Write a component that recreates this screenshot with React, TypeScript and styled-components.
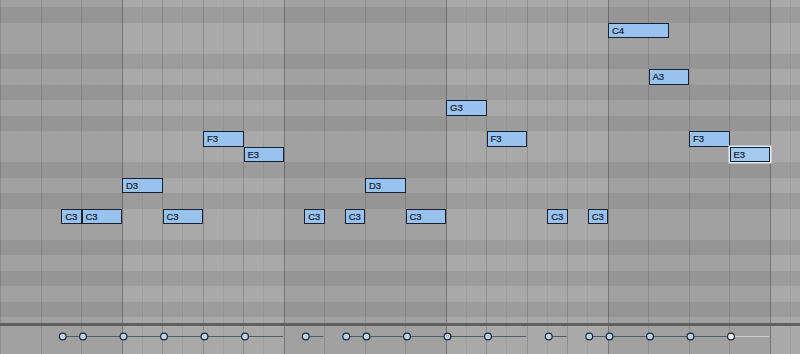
import React from 'react';
import styled, { createGlobalStyle } from 'styled-components';

const GlobalStyle = createGlobalStyle`
  html, body {
    margin: 0;
    padding: 0;
    background: #a9a9a9;
  }
`;

const BEAT = 40.5;
const X0 = 0.5;
const ROW = 15.5;
const C3_TOP = 208.5;

type Note = { name: string; pitch: number; start: number; len: number; selected?: boolean };

const notes: Note[] = [
  { name: 'C3', pitch: 0, start: 1.5, len: 0.5 },
  { name: 'C3', pitch: 0, start: 2, len: 1 },
  { name: 'D3', pitch: 2, start: 3, len: 1 },
  { name: 'C3', pitch: 0, start: 4, len: 1 },
  { name: 'F3', pitch: 5, start: 5, len: 1 },
  { name: 'E3', pitch: 4, start: 6, len: 1 },
  { name: 'C3', pitch: 0, start: 7.5, len: 0.5 },
  { name: 'C3', pitch: 0, start: 8.5, len: 0.5 },
  { name: 'D3', pitch: 2, start: 9, len: 1 },
  { name: 'C3', pitch: 0, start: 10, len: 1 },
  { name: 'G3', pitch: 7, start: 11, len: 1 },
  { name: 'F3', pitch: 5, start: 12, len: 1 },
  { name: 'C3', pitch: 0, start: 13.5, len: 0.5 },
  { name: 'C3', pitch: 0, start: 14.5, len: 0.5 },
  { name: 'C4', pitch: 12, start: 15, len: 1.5 },
  { name: 'A3', pitch: 9, start: 16, len: 1 },
  { name: 'F3', pitch: 5, start: 17, len: 1 },
  { name: 'E3', pitch: 4, start: 18, len: 1, selected: true },
];

// pitches shown top to bottom, D4 (partly hidden) down to F2
const rows: number[] = [];
for (let p = 14; p >= -7; p--) rows.push(p);
const isBlack = (p: number) => [1, 3, 6, 8, 10].includes(((p % 12) + 12) % 12);

const Stage = styled.div`
  position: relative;
  width: 800px;
  height: 354px;
  overflow: hidden;
  display: grid;
  background: #a9a9a9;
  font-family: 'Liberation Sans', Arial, sans-serif;
  & > * {
    grid-area: 1 / 1;
  }
`;

const Bars = styled.div`
  display: flex;
  margin-left: -40.5px;
  height: 354px;
`;

const Bar = styled.div<{ $dark: boolean }>`
  display: flex;
  flex: 0 0 162px;
  background: ${(p) => (p.$dark ? 'rgba(0,0,0,0.045)' : 'transparent')};
`;

const Cell = styled.div<{ $kind: 'bar' | 'beat' | 'step' }>`
  flex: 0 0 20.25px;
  box-sizing: border-box;
  border-left: 1px solid
    ${(p) => (p.$kind === 'bar' ? '#777777' : p.$kind === 'beat' ? '#8f8f8f' : '#a0a0a0')};
`;

const Lanes = styled.div`
  display: flex;
  flex-direction: column;
`;

const KeyRows = styled.div`
  display: flex;
  flex-direction: column;
  height: 323px;
  overflow: hidden;
`;

const KeyRow = styled.div<{ $black: boolean; $h: number }>`
  flex: 0 0 ${(p) => p.$h}px;
  background: ${(p) => (p.$black ? 'rgba(0,0,0,0.075)' : 'transparent')};
`;

const Divider = styled.div`
  height: 3px;
  background: #606060;
`;

const VelocityLane = styled.div`
  height: 28px;
  svg {
    display: block;
  }
`;

const NoteBox = styled.div<{ $selected?: boolean }>`
  position: absolute;
  box-sizing: border-box;
  height: 15.5px;
  padding-left: 3px;
  display: flex;
  align-items: center;
  background: ${(p) => (p.$selected ? '#a3c9ef' : '#99c2ee')};
  border: 1px solid #17202f;
  box-shadow: ${(p) => (p.$selected ? '0 0 0 1.5px #e3edf3' : 'none')};
  color: #13203a;
  font-size: 9.5px;
  line-height: 1;
  -webkit-text-stroke: 0.2px #13203a;
  white-space: nowrap;
  overflow: hidden;
`;

const bx = (b: number) => X0 + b * BEAT;

export default function App() {
  return (
    <>
      <GlobalStyle />
      <Stage>
        <Bars>
          {Array.from({ length: 6 }, (_, i) => (
            <Bar key={i} $dark={i % 2 === 0}>
              {Array.from({ length: 8 }, (_, j) => (
                <Cell key={j} $kind={j === 0 ? 'bar' : j % 2 === 0 ? 'beat' : 'step'} />
              ))}
            </Bar>
          ))}
        </Bars>

        <Lanes>
          <KeyRows>
            {rows.map((p, i) => (
              <KeyRow key={p} $black={isBlack(p)} $h={i === 0 ? 7 : ROW} />
            ))}
          </KeyRows>
          <Divider />
          <VelocityLane>
            <svg width="800" height="28" viewBox="0 0 800 28">
              {notes.map((n, i) => {
                const cx = bx(n.start) + 1.5;
                const end = bx(n.start + n.len) - 1;
                return (
                  <line
                    key={'l' + i}
                    x1={cx}
                    y1={10.5}
                    x2={end}
                    y2={10.5}
                    stroke={n.selected ? '#c9cdd1' : '#555b62'}
                    strokeWidth={1}
                  />
                );
              })}
              {notes.map((n, i) => (
                <circle
                  key={'c' + i}
                  cx={bx(n.start) + 1.5}
                  cy={10.5}
                  r={3.4}
                  fill={n.selected ? '#f4f6f8' : '#c3d3e6'}
                  stroke="#1c2940"
                  strokeWidth={1.2}
                />
              ))}
            </svg>
          </VelocityLane>
        </Lanes>

        {notes.map((n, i) => (
          <NoteBox
            key={i}
            $selected={n.selected}
            style={{
              left: bx(n.start),
              top: C3_TOP - n.pitch * ROW,
              width: n.len * BEAT,
            }}
          >
            {n.name}
          </NoteBox>
        ))}
      </Stage>
    </>
  );
}
